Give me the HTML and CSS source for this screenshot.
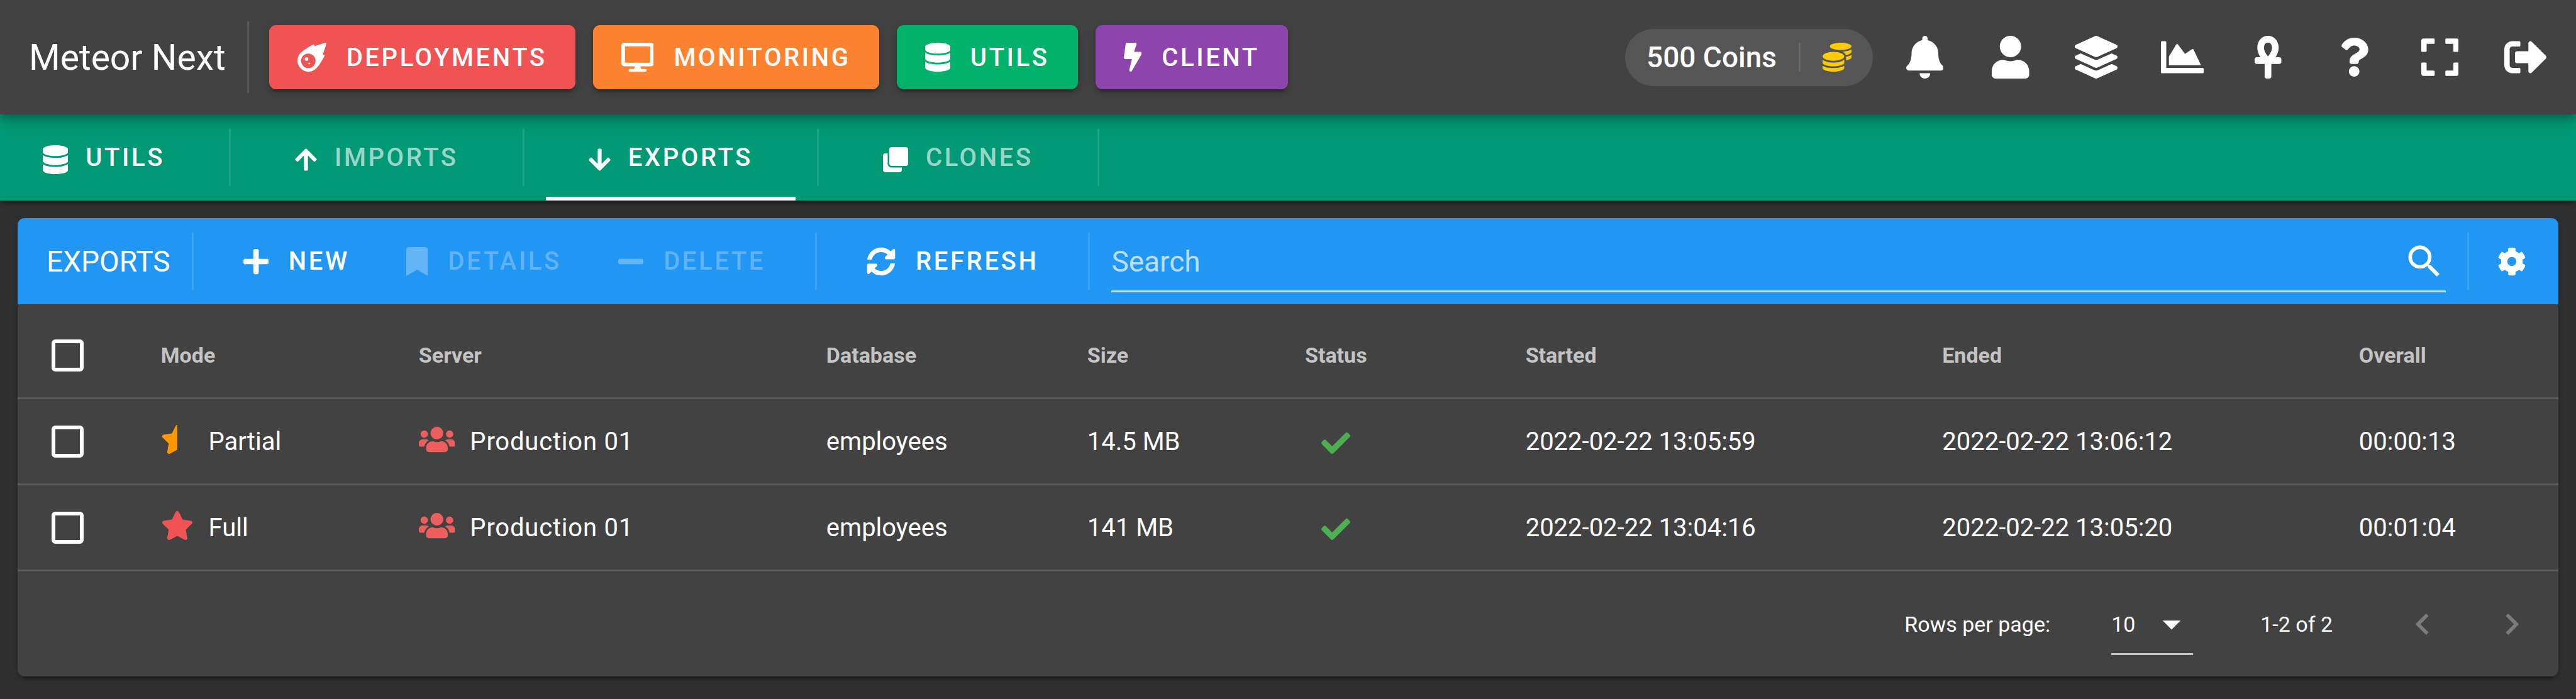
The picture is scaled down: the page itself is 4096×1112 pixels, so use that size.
FILE: index.html
```html
<!DOCTYPE html>
<html lang="en">
<head>
<meta charset="utf-8">
<title>Meteor Next - Exports</title>
<link rel="stylesheet" href="styles.css">
</head>
<body>
<header class="topbar">
  <h1 class="brand">Meteor Next</h1>
  <span class="divider divider-tall"></span>
  <nav class="apps" aria-label="Applications">
    <button type="button" class="btn app app-deployments">
      <svg class="icon" viewBox="0 0 512 512"><path d="M511.328,20.8027c-11.60759,38.70264-34.30724,111.70173-61.30311,187.70077,6.99893,2.09372,13.4042,4,18.60653,5.59368a16.06158,16.06158,0,0,1,9.49854,22.906c-22.106,42.29635-82.69047,152.795-142.47819,214.40356-.99984,1.09373-1.99969,2.5-2.99954,3.49995A194.83046,194.83046,0,1,1,57.085,179.41009c.99985-1,2.40588-2,3.49947-3,61.59994-59.90549,171.97367-120.40473,214.37343-142.4982a16.058,16.058,0,0,1,22.90274,9.49988c1.59351,5.09368,3.49947,11.5936,5.5929,18.59351C379.34818,35.00565,452.43074,12.30281,491.12794.70921A16.18325,16.18325,0,0,1,511.328,20.8027ZM319.951,320.00207A127.98041,127.98041,0,1,0,191.97061,448.00046,127.97573,127.97573,0,0,0,319.951,320.00207Zm-127.98041-31.9996a31.9951,31.9951,0,1,1-31.9951-31.9996A31.959,31.959,0,0,1,191.97061,288.00247Zm31.9951,79.999a15.99755,15.99755,0,1,1-15.99755-15.9998A16.04975,16.04975,0,0,1,223.96571,368.00147Z"/></svg>
      DEPLOYMENTS
    </button>
    <button type="button" class="btn app app-monitoring">
      <svg class="icon" viewBox="0 0 576 512"><path d="M528 0H48C21.5 0 0 21.5 0 48v320c0 26.5 21.5 48 48 48h192l-16 48h-72c-13.3 0-24 10.7-24 24s10.7 24 24 24h272c13.3 0 24-10.7 24-24s-10.7-24-24-24h-72l-16-48h192c26.5 0 48-21.5 48-48V48c0-26.5-21.5-48-48-48zm-16 352H64V64h448v288z"/></svg>
      MONITORING
    </button>
    <button type="button" class="btn app app-utils">
      <svg class="icon" viewBox="0 0 448 512"><path id="database" d="M448 73.143v45.714C448 159.143 347.667 192 224 192S0 159.143 0 118.857V73.143C0 32.857 100.333 0 224 0s224 32.857 224 73.143zM448 176v102.857C448 319.143 347.667 352 224 352S0 319.143 0 278.857V176c48.125 33.143 136.208 48.572 224 48.572S399.874 209.143 448 176zm0 160v102.857C448 479.143 347.667 512 224 512S0 479.143 0 438.857V336c48.125 33.143 136.208 48.572 224 48.572S399.874 369.143 448 336z"/></svg>
      UTILS
    </button>
    <button type="button" class="btn app app-client">
      <svg class="icon" viewBox="0 0 320 512"><path d="M296 160H180.6l42.6-129.8C227.2 15 215.7 0 200 0H56C44 0 33.8 8.9 32.2 20.8l-32 240C-1.7 275.2 9.5 288 24 288h118.7L96.6 482.5c-3.6 15.2 8 29.5 23.3 29.5 8.4 0 16.4-4.4 20.8-12l176-304c9.3-15.9-2.2-36-20.7-36z"/></svg>
      CLIENT
    </button>
  </nav>
  <button type="button" class="coins">
    500 Coins
    <span class="divider divider-short"></span>
    <svg class="icon icon-coins" viewBox="0 0 512 512"><path d="M0 405.3V448c0 35.3 86 64 192 64s192-28.7 192-64v-42.7C342.7 434.4 267.2 448 192 448S41.3 434.4 0 405.3zM320 128c106 0 192-28.7 192-64S426 0 320 0 128 28.7 128 64s86 64 192 64zM0 300.4V352c0 35.3 86 64 192 64s192-28.7 192-64v-51.6c-41.3 34-116.9 51.6-192 51.6S41.3 334.4 0 300.4zm416 11c57.3-11.1 96-31.7 96-55.4v-42.7c-23.2 16.4-57.3 27.6-96 34.5v63.6zM192 160C86 160 0 195.8 0 240s86 80 192 80 192-35.8 192-80-86-80-192-80zm219.3 56.3c60-10.8 100.7-32 100.7-56.3v-42.7c-35.5 25.1-96.5 38.6-160.7 41.8 29.5 14.3 51.2 33.5 60 57.2z"/></svg>
  </button>
  <div class="actions">
    <button type="button" class="action" aria-label="Notifications"><svg class="icon icon-large" viewBox="0 0 448 512"><path d="M224 512c35.32 0 63.97-28.65 63.97-64H160.03c0 35.35 28.65 64 63.97 64zm215.39-149.71c-19.32-20.76-55.47-51.99-55.47-154.29 0-77.7-54.48-139.9-127.94-155.16V32c0-17.67-14.32-32-31.98-32s-31.98 14.33-31.98 32v20.84C118.56 68.1 64.08 130.3 64.08 208c0 102.3-36.15 133.53-55.47 154.29-6 6.45-8.66 14.16-8.61 21.71.11 16.4 12.98 32 32.1 32h383.8c19.12 0 32-15.6 32.1-32 .05-7.55-2.61-15.27-8.61-21.71z"/></svg></button>
    <button type="button" class="action" aria-label="Profile"><svg class="icon icon-large" viewBox="0 0 448 512"><path d="M224 256c70.7 0 128-57.3 128-128S294.7 0 224 0 96 57.3 96 128s57.3 128 128 128zm89.6 32h-16.7c-22.2 10.2-46.9 16-72.9 16s-50.6-5.8-72.9-16h-16.7C60.2 288 0 348.2 0 422.4V464c0 26.5 21.5 48 48 48h352c26.5 0 48-21.5 48-48v-41.6c0-74.2-60.2-134.4-134.4-134.4z"/></svg></button>
    <button type="button" class="action" aria-label="Groups"><svg class="icon icon-large" viewBox="0 0 512 512"><path d="M12.41 148.02l232.94 105.67c6.8 3.09 14.49 3.09 21.29 0l232.94-105.67c16.55-7.51 16.55-32.52 0-40.03L266.65 2.31a25.607 25.607 0 0 0-21.29 0L12.41 107.98c-16.55 7.51-16.55 32.53 0 40.04zm487.18 88.28l-58.09-26.33-161.64 73.27c-7.56 3.43-15.59 5.17-23.86 5.17s-16.29-1.74-23.86-5.17L70.51 209.97l-58.1 26.33c-16.55 7.5-16.55 32.5 0 40l232.94 105.59c6.8 3.08 14.49 3.08 21.29 0L499.59 276.3c16.55-7.5 16.55-32.5 0-40zm0 127.8l-57.87-26.23-161.86 73.37c-7.56 3.43-15.59 5.17-23.86 5.17s-16.29-1.74-23.86-5.17L70.29 337.87 12.41 364.1c-16.55 7.5-16.55 32.5 0 40l232.94 105.59c6.8 3.08 14.49 3.08 21.29 0L499.59 404.1c16.55-7.5 16.55-32.5 0-40z"/></svg></button>
    <button type="button" class="action" aria-label="Statistics"><svg class="icon icon-large" viewBox="0 0 512 512"><path d="M500 384c6.6 0 12 5.4 12 12v40c0 6.6-5.4 12-12 12H12c-6.6 0-12-5.4-12-12V76c0-6.6 5.4-12 12-12h40c6.6 0 12 5.4 12 12v308h436zM372.7 159.5L288 216l-85.3-113.7c-5.1-6.8-15.5-6.3-19.9 1L96 248v104h384l-89.9-187.8c-3.2-6.5-11.4-8.7-17.4-4.7z"/></svg></button>
    <button type="button" class="action" aria-label="Administration"><svg class="icon icon-large" viewBox="0 0 320 512"><path d="M296 256h-44.62C272.46 222.01 288 181.65 288 144 288 55.63 230.69 0 160 0S32 55.63 32 144c0 37.65 15.54 78.01 36.62 112H24c-13.25 0-24 10.74-24 24v32c0 13.25 10.75 24 24 24h96v152c0 13.25 10.75 24 24 24h32c13.25 0 24-10.75 24-24V336h96c13.25 0 24-10.75 24-24v-32c0-13.26-10.75-24-24-24zM160 80c29.61 0 48 24.52 48 64 0 34.66-27.14 78.14-48 100.87-20.86-22.72-48-66.21-48-100.87 0-39.48 18.39-64 48-64z"/></svg></button>
    <button type="button" class="action" aria-label="Help"><svg class="icon icon-help" viewBox="0 0 384 512"><path d="M202.021 0C122.202 0 70.503 32.703 29.914 91.026c-7.363 10.58-5.093 25.086 5.178 32.874l43.138 32.709c10.373 7.865 25.132 6.026 33.253-4.148 25.049-31.381 43.63-49.449 82.757-49.449 30.764 0 68.816 19.799 68.816 49.631 0 22.552-18.617 34.134-48.993 51.164-35.423 19.86-82.299 44.576-82.299 106.405V320c0 13.255 10.745 24 24 24h72.471c13.255 0 24-10.745 24-24v-5.773c0-42.86 125.268-44.645 125.268-160.627C377.504 66.256 286.902 0 202.021 0zM192 373.459c-38.196 0-69.271 31.075-69.271 69.271 0 38.195 31.075 69.27 69.271 69.27s69.271-31.075 69.271-69.271-31.075-69.27-69.271-69.27z"/></svg></button>
    <button type="button" class="action" aria-label="Full screen"><svg class="icon icon-large" viewBox="0 0 448 512"><path d="M0 180V56c0-13.3 10.7-24 24-24h124c6.6 0 12 5.4 12 12v40c0 6.6-5.4 12-12 12H64v84c0 6.6-5.4 12-12 12H12c-6.6 0-12-5.4-12-12zM288 44v40c0 6.6 5.4 12 12 12h84v84c0 6.6 5.4 12 12 12h40c6.6 0 12-5.4 12-12V56c0-13.3-10.7-24-24-24H300c-6.6 0-12 5.4-12 12zm148 276h-40c-6.6 0-12 5.4-12 12v84h-84c-6.6 0-12 5.4-12 12v40c0 6.6 5.4 12 12 12h124c13.3 0 24-10.7 24-24V332c0-6.6-5.4-12-12-12zM160 468v-40c0-6.6-5.4-12-12-12H64v-84c0-6.6-5.4-12-12-12H12c-6.6 0-12 5.4-12 12v124c0 13.3 10.7 24 24 24h124c6.6 0 12-5.4 12-12z"/></svg></button>
    <button type="button" class="action" aria-label="Log out"><svg class="icon icon-large" viewBox="0 0 512 512"><path d="M497 273L329 441c-15 15-41 4.5-41-17v-96H152c-13.3 0-24-10.7-24-24v-96c0-13.3 10.7-24 24-24h136V88c0-21.4 25.9-32 41-17l168 168c9.3 9.4 9.3 24.6 0 34zM192 436v-40c0-6.6-5.4-12-12-12H96c-17.7 0-32-14.3-32-32V160c0-17.7 14.3-32 32-32h84c6.6 0 12-5.4 12-12V76c0-6.6-5.4-12-12-12H96c-53 0-96 43-96 96v192c0 53 43 96 96 96h84c6.6 0 12-5.4 12-12z"/></svg></button>
  </div>
</header>

<nav class="tabs" aria-label="Utils">
  <a class="tab tab-home" href="#utils">
    <svg class="icon" viewBox="0 0 448 512"><use href="#database"/></svg>
    <span>UTILS</span>
  </a>
  <span class="divider"></span>
  <a class="tab" href="#imports">
    <svg class="icon icon-small" viewBox="0 0 448 512"><path d="M34.9 289.5l-22.2-22.2c-9.4-9.4-9.4-24.6 0-33.9L207 39c9.4-9.4 24.6-9.4 33.9 0l194.3 194.3c9.4 9.4 9.4 24.6 0 33.9L413 289.4c-9.5 9.5-25 9.3-34.3-.4L264 168.6V456c0 13.3-10.7 24-24 24h-32c-13.3 0-24-10.7-24-24V168.6L69.2 289.1c-9.3 9.8-24.8 10-34.3.4z"/></svg>
    <span>IMPORTS</span>
  </a>
  <span class="divider"></span>
  <a class="tab tab-active" href="#exports" aria-current="page">
    <svg class="icon icon-small" viewBox="0 0 448 512"><path d="M413.1 222.5l22.2 22.2c9.4 9.4 9.4 24.6 0 33.9L241 473c-9.4 9.4-24.6 9.4-33.9 0L12.7 278.6c-9.4-9.4-9.4-24.6 0-33.9l22.2-22.2c9.5-9.5 25-9.3 34.3.4L184 343.4V56c0-13.3 10.7-24 24-24h32c13.3 0 24 10.7 24 24v287.4l114.8-120.5c9.3-9.8 24.8-10 34.3-.4z"/></svg>
    <span>EXPORTS</span>
  </a>
  <span class="divider"></span>
  <a class="tab" href="#clones">
    <svg class="icon icon-small" viewBox="0 0 512 512"><path d="M464 0c26.51 0 48 21.49 48 48v288c0 26.51-21.49 48-48 48H176c-26.51 0-48-21.49-48-48V48c0-26.51 21.49-48 48-48h288M176 416c-44.112 0-80-35.888-80-80V128H48c-26.51 0-48 21.49-48 48v288c0 26.51 21.49 48 48 48h288c26.51 0 48-21.49 48-48v-48H176z"/></svg>
    <span>CLONES</span>
  </a>
  <span class="divider"></span>
</nav>

<main class="card">
  <div class="toolbar">
    <h2 class="toolbar-title">EXPORTS</h2>
    <span class="divider"></span>
    <div class="tools">
      <button type="button" class="btn">
        <svg class="icon" viewBox="0 0 448 512"><path d="M416 208H272V64c0-17.67-14.33-32-32-32h-32c-17.67 0-32 14.33-32 32v144H32c-17.67 0-32 14.33-32 32v32c0 17.67 14.33 32 32 32h144v144c0 17.67 14.33 32 32 32h32c17.67 0 32-14.33 32-32V304h144c17.67 0 32-14.33 32-32v-32c0-17.67-14.33-32-32-32z"/></svg>
        NEW
      </button>
      <button type="button" class="btn" disabled>
        <svg class="icon" viewBox="0 0 384 512"><path d="M0 512V48C0 21.49 21.49 0 48 0h288c26.51 0 48 21.49 48 48v464L192 400 0 512z"/></svg>
        DETAILS
      </button>
      <button type="button" class="btn" disabled>
        <svg class="icon" viewBox="0 0 448 512"><path d="M416 208H32c-17.67 0-32 14.33-32 32v32c0 17.67 14.33 32 32 32h384c17.67 0 32-14.33 32-32v-32c0-17.67-14.33-32-32-32z"/></svg>
        DELETE
      </button>
    </div>
    <span class="divider"></span>
    <div class="tools">
      <button type="button" class="btn">
        <svg class="icon" viewBox="0 0 512 512"><path d="M370.72 133.28C339.458 104.008 298.888 87.962 255.848 88c-77.458.068-144.328 53.178-162.791 126.85-1.344 5.363-6.122 9.15-11.651 9.15H24.103c-7.498 0-13.194-6.807-11.807-14.176C33.933 94.924 134.813 8 256 8c66.448 0 126.791 26.136 171.315 68.685L463.03 40.97C478.149 25.851 504 36.559 504 57.941V192c0 13.255-10.745 24-24 24H345.941c-21.382 0-32.09-25.851-16.971-40.971l41.75-41.749zM32 296h134.059c21.382 0 32.09 25.851 16.971 40.971l-41.75 41.75c31.262 29.273 71.835 45.319 114.876 45.28 77.418-.07 144.315-53.144 162.787-126.849 1.344-5.363 6.122-9.15 11.651-9.15h57.304c7.498 0 13.194 6.807 11.807 14.176C478.067 417.076 377.187 504 256 504c-66.448 0-126.791-26.136-171.315-68.685L48.97 471.03C33.851 486.149 8 475.441 8 454.059V320c0-13.255 10.745-24 24-24z"/></svg>
        REFRESH
      </button>
    </div>
    <span class="divider"></span>
    <label class="search">
      <input class="search-input" type="text" placeholder="Search" aria-label="Search">
      <svg class="icon icon-large" viewBox="0 0 24 24"><path d="M9.5,3A6.5,6.5 0 0,1 16,9.5C16,11.11 15.41,12.59 14.44,13.73L14.71,14H15.5L20.5,19L19,20.5L14,15.5V14.71L13.73,14.44C12.59,15.41 11.11,16 9.5,16A6.5,6.5 0 0,1 3,9.5A6.5,6.5 0 0,1 9.5,3M9.5,5C7,5 5,7 5,9.5C5,12 7,14 9.5,14C12,14 14,12 14,9.5C14,7 12,5 9.5,5Z"/></svg>
    </label>
    <span class="divider"></span>
    <button type="button" class="settings" aria-label="Settings">
      <svg class="icon" viewBox="0 0 512 512"><path d="M487.4 315.7l-42.6-24.6c4.3-23.2 4.3-47 0-70.2l42.6-24.6c4.9-2.8 7.1-8.6 5.5-14-11.1-35.6-30-67.8-54.7-94.6-3.8-4.1-10-5.1-14.8-2.3L380.8 110c-17.9-15.4-38.5-27.3-60.8-35.1V25.8c0-5.6-3.9-10.5-9.4-11.7-36.7-8.2-74.3-7.8-109.2 0-5.5 1.2-9.4 6.1-9.4 11.7V75c-22.2 7.9-42.8 19.8-60.8 35.1L88.7 85.5c-4.9-2.8-11-1.9-14.8 2.3-24.7 26.7-43.6 58.9-54.7 94.6-1.7 5.4.6 11.2 5.5 14L67.3 221c-4.3 23.2-4.3 47 0 70.2l-42.6 24.6c-4.9 2.8-7.1 8.6-5.5 14 11.1 35.6 30 67.8 54.7 94.6 3.8 4.1 10 5.1 14.8 2.3l42.6-24.6c17.9 15.4 38.5 27.3 60.8 35.1v49.2c0 5.6 3.9 10.5 9.4 11.7 36.7 8.2 74.3 7.8 109.2 0 5.5-1.2 9.4-6.1 9.4-11.7v-49.2c22.2-7.9 42.8-19.8 60.8-35.1l42.6 24.6c4.9 2.8 11 1.9 14.8-2.3 24.7-26.7 43.6-58.9 54.7-94.6 1.5-5.5-.7-11.3-5.6-14.1zM256 336c-44.1 0-80-35.9-80-80s35.9-80 80-80 80 35.9 80 80-35.9 80-80 80z"/></svg>
    </button>
  </div>

  <table class="exports">
    <colgroup>
      <col class="col-check"><col class="col-mode"><col class="col-server"><col class="col-database"><col class="col-size"><col class="col-status"><col class="col-date"><col class="col-date"><col>
    </colgroup>
    <thead>
      <tr>
        <th><input class="checkbox" type="checkbox" aria-label="Select all"></th>
        <th>Mode</th><th>Server</th><th>Database</th><th>Size</th><th>Status</th><th>Started</th><th>Ended</th><th>Overall</th>
      </tr>
    </thead>
    <tbody>
      <tr>
        <td><input class="checkbox" type="checkbox" aria-label="Select export of 13:05:59"></td>
        <td><span class="with-icon"><svg class="icon mode-partial" viewBox="0 0 576 512"><path d="M288 0c-11.4 0-22.8 5.9-28.7 17.8L194 150.2 47.9 171.4c-26.2 3.8-36.7 36.1-17.7 54.6l105.7 103-25 145.5c-4.5 26.1 23 46 46.4 33.7L288 439.6V0z"/></svg>Partial</span></td>
        <td><span class="with-icon server"><svg class="icon shared" viewBox="0 0 640 512"><path id="users" d="M96 224c35.3 0 64-28.7 64-64s-28.7-64-64-64-64 28.7-64 64 28.7 64 64 64zm448 0c35.3 0 64-28.7 64-64s-28.7-64-64-64-64 28.7-64 64 28.7 64 64 64zm32 32h-64c-17.6 0-33.5 7.1-45.1 18.6 40.3 22.1 68.9 62 75.1 109.4h66c17.7 0 32-14.3 32-32v-32c0-35.3-28.7-64-64-64zm-256 0c61.9 0 112-50.1 112-112S381.9 32 320 32 208 82.1 208 144s50.1 112 112 112zm76.8 32h-8.3c-20.8 10-43.9 16-68.5 16s-47.6-6-68.5-16h-8.3C179.6 288 128 339.6 128 403.2V432c0 26.5 21.5 48 48 48h288c26.5 0 48-21.5 48-48v-28.8c0-63.6-51.6-115.2-115.2-115.2zm-223.7-13.4C161.5 263.1 145.6 256 128 256H64c-35.3 0-64 28.7-64 64v32c0 17.7 14.3 32 32 32h65.9c6.3-47.4 34.9-87.3 75.2-109.4z"/></svg>Production 01</span></td>
        <td>employees</td>
        <td>14.5 MB</td>
        <td><svg class="icon status-ok" viewBox="0 0 512 512" role="img" aria-label="Succeeded"><path id="check" d="M173.898 439.404l-166.4-166.4c-9.997-9.997-9.997-26.206 0-36.204l36.203-36.204c9.997-9.998 26.207-9.998 36.204 0L192 312.69 432.095 72.596c9.997-9.997 26.207-9.997 36.204 0l36.203 36.204c9.997 9.997 9.997 26.206 0 36.204l-294.4 294.401c-9.998 9.997-26.207 9.997-36.204-.001z"/></svg></td>
        <td>2022-02-22 13:05:59</td>
        <td>2022-02-22 13:06:12</td>
        <td>00:00:13</td>
      </tr>
      <tr>
        <td><input class="checkbox" type="checkbox" aria-label="Select export of 13:04:16"></td>
        <td><span class="with-icon"><svg class="icon mode-full" viewBox="0 0 576 512"><path d="M259.3 17.8L194 150.2 47.9 171.5c-26.2 3.8-36.7 36.1-17.7 54.6l105.7 103-25 145.5c-4.5 26.3 23.2 46 46.4 33.7L288 439.6l130.7 68.7c23.2 12.2 50.9-7.4 46.4-33.7l-25-145.5 105.7-103c19-18.5 8.5-50.8-17.7-54.6L382 150.2 316.7 17.8c-11.7-23.6-45.6-23.9-57.4 0z"/></svg>Full</span></td>
        <td><span class="with-icon server"><svg class="icon shared" viewBox="0 0 640 512"><use href="#users"/></svg>Production 01</span></td>
        <td>employees</td>
        <td>141 MB</td>
        <td><svg class="icon status-ok" viewBox="0 0 512 512" role="img" aria-label="Succeeded"><use href="#check"/></svg></td>
        <td>2022-02-22 13:04:16</td>
        <td>2022-02-22 13:05:20</td>
        <td>00:01:04</td>
      </tr>
    </tbody>
  </table>

  <footer class="pagination">
    <label for="rows">Rows per page:</label>
    <span class="rows">
      <select class="rows-select" id="rows"><option>10</option><option>15</option><option>All</option></select>
      <svg class="icon icon-large rows-arrow" viewBox="0 0 24 24"><path d="M7,10L12,15L17,10H7Z"/></svg>
    </span>
    <span>1-2 of 2</span>
    <span class="pager">
      <button type="button" class="page" aria-label="Previous page" disabled><svg class="icon icon-large" viewBox="0 0 24 24"><path d="M15.41,16.58L10.83,12L15.41,7.41L14,6L8,12L14,18L15.41,16.58Z"/></svg></button>
      <button type="button" class="page" aria-label="Next page" disabled><svg class="icon icon-large" viewBox="0 0 24 24"><path d="M8.59,16.58L13.17,12L8.59,7.41L10,6L16,12L10,18L8.59,16.58Z"/></svg></button>
    </span>
  </footer>
</main>
</body>
</html>
```

FILE: styles.css
```css
* {
  box-sizing: border-box;
}

body {
  margin: 0;
  background: #303030;
  color: #fff;
  font-family: Roboto, "Liberation Sans", sans-serif;
  font-size: 40px;
}

button,
input,
select {
  margin: 0;
  padding: 0;
  border: 0;
  background: none;
  color: inherit;
  font: inherit;
}

h1,
h2 {
  margin: 0;
  font-weight: 400;
}

.icon {
  display: block;
  flex: none;
  height: 46px;
  fill: currentColor;
}

.icon-small {
  height: 40px;
}

.icon-large {
  height: 68px;
}

.icon-help {
  height: 62px;
}

.divider {
  flex: none;
  width: 3px;
  height: 91px;
  background: rgba(255, 255, 255, 0.12);
}

.divider-tall {
  height: 114px;
}

.divider-short {
  height: 46px;
}

.btn {
  display: flex;
  align-items: center;
  gap: 32px;
  height: 102px;
  padding: 0 45px;
  border-radius: 11px;
  font-weight: 500;
  letter-spacing: 0.09em;
  white-space: nowrap;
}

.btn:disabled {
  color: rgba(255, 255, 255, 0.3);
}

/* Top bar */

.topbar {
  position: relative;
  z-index: 2;
  display: flex;
  align-items: center;
  height: 182px;
  padding: 0 12px 0 46px;
  background: #424242;
  box-shadow: 0 6px 11px -3px rgba(0, 0, 0, 0.2), 0 11px 14px rgba(0, 0, 0, 0.14), 0 3px 28px rgba(0, 0, 0, 0.12);
}

.brand {
  margin-right: 34px;
  font-size: 57px;
  white-space: nowrap;
}

.apps {
  display: flex;
  gap: 28px;
  margin-left: 32px;
}

.app {
  box-shadow: 0 9px 3px -6px rgba(0, 0, 0, 0.2), 0 6px 6px rgba(0, 0, 0, 0.14), 0 3px 14px rgba(0, 0, 0, 0.12);
}

.app-deployments {
  background: #ef5354;
}

.app-monitoring {
  background: #fd8331;
}

.app-utils {
  background: #00b16a;
}

.app-client {
  background: #8e44ad;
}

.coins {
  display: flex;
  align-items: center;
  gap: 35px;
  height: 91px;
  margin-left: auto;
  padding: 0 34px;
  border-radius: 46px;
  background: #555;
  font-size: 46px;
  font-weight: 500;
  white-space: nowrap;
}

.icon-coins {
  color: #ffcb05;
}

.actions {
  display: grid;
  grid-template-columns: repeat(8, 1fr);
  width: 1092px;
  margin-left: 14px;
}

.action {
  display: flex;
  align-items: center;
  justify-content: center;
  height: 136px;
}

/* Section tabs */

.tabs {
  display: flex;
  align-items: center;
  gap: 34px;
  height: 137px;
  background: #009975;
  box-shadow: 0 9px 3px -6px rgba(0, 0, 0, 0.2), 0 6px 6px rgba(0, 0, 0, 0.14), 0 3px 14px rgba(0, 0, 0, 0.12);
}

.tab {
  display: flex;
  align-items: center;
  gap: 28px;
  height: 137px;
  padding: 0 68px;
  border-top: 6px solid transparent;
  border-bottom: 6px solid transparent;
  color: #fff;
  font-weight: 500;
  letter-spacing: 0.09em;
  text-decoration: none;
}

.tab .icon {
  margin-top: 6px;
}

.tab span {
  opacity: 0.6;
}

.tab-home span,
.tab-active span {
  opacity: 1;
}

.tab-active {
  border-bottom-color: #fff;
}

/* Exports card */

.card {
  margin: 28px;
  border-radius: 11px;
  background: #424242;
  box-shadow: 0 9px 3px -6px rgba(0, 0, 0, 0.2), 0 6px 6px rgba(0, 0, 0, 0.14), 0 3px 14px rgba(0, 0, 0, 0.12);
}

.toolbar {
  display: flex;
  align-items: center;
  gap: 34px;
  height: 137px;
  padding: 0 51px 0 46px;
  border-radius: 11px 11px 0 0;
  background: #2196f3;
}

.toolbar-title {
  font-size: 46px;
}

.tools {
  display: flex;
}

.search {
  display: flex;
  flex: 1;
  align-items: center;
  height: 98px;
  padding-top: 3px;
  border-bottom: 3px solid rgba(255, 255, 255, 0.7);
}

.search-input {
  flex: 1;
  min-width: 0;
  outline: 0;
  font-size: 46px;
}

.search-input::placeholder {
  color: rgba(255, 255, 255, 0.7);
  opacity: 1;
}

.settings {
  margin-left: 11px;
}

.exports {
  width: 100%;
  border-collapse: separate;
  border-spacing: 0;
  table-layout: fixed;
}

.col-check {
  width: 4.5%;
}

.col-mode {
  width: 10.15%;
}

.col-server {
  width: 16.04%;
}

.col-database {
  width: 10.27%;
}

.col-size {
  width: 8.57%;
}

.col-status {
  width: 8.68%;
}

.col-date {
  width: 16.4%;
}

.exports th,
.exports td {
  height: 137px;
  padding: 0 46px;
  border-bottom: 3px solid rgba(255, 255, 255, 0.12);
  text-align: left;
  white-space: nowrap;
}

.exports th:first-child,
.exports td:first-child {
  padding-left: 54px;
}

.exports th {
  height: 151px;
  padding-top: 14px;
  color: rgba(255, 255, 255, 0.7);
  font-size: 34px;
  font-weight: 700;
}

.checkbox {
  display: block;
  width: 51px;
  height: 51px;
  border: 6px solid #fff;
  border-radius: 6px;
  appearance: none;
}

.with-icon {
  display: flex;
  align-items: center;
  gap: 24px;
}

.with-icon .icon {
  margin-bottom: 6px;
}

.server {
  letter-spacing: 0.02em;
}

.mode-partial {
  color: #ff9800;
}

.mode-full {
  color: #ef5354;
}

.shared {
  color: #ec5f5d;
}

.status-ok {
  margin: 6px 0 0 26px;
  color: #4caf50;
}

/* Table footer */

.pagination {
  display: flex;
  align-items: center;
  justify-content: flex-end;
  height: 167px;
  padding-right: 40px;
  font-size: 34px;
}

.rows {
  position: relative;
  width: 130px;
  margin: 0 107px 0 97px;
}

.rows-select {
  display: block;
  width: 100%;
  height: 98px;
  padding-top: 3px;
  border-bottom: 3px solid rgba(255, 255, 255, 0.7);
  appearance: none;
}

/* The arrow lies over the select and lets clicks through. */
.rows-arrow {
  position: absolute;
  top: 15px;
  right: 0;
  pointer-events: none;
}

.pager {
  display: flex;
  gap: 74px;
  margin-left: 109px;
}

.page:disabled {
  color: rgba(255, 255, 255, 0.3);
}
```
